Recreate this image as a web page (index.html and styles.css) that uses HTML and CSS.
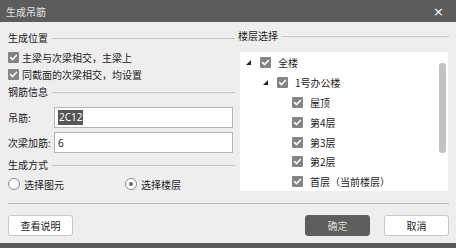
FILE: index.html
```html
<!DOCTYPE html>
<html lang="zh">
<head>
<meta charset="utf-8">
<link rel="stylesheet" href="styles.css">
</head>
<body>
<div class="dialog">
  <div class="titlebar">
    <span class="title">生成吊筋</span>
    <span class="close">×</span>
  </div>
  <div class="content">
    <div class="cols">
      <div class="left">
        <div class="group-title"><span>生成位置</span><i></i></div>
        <div class="check-row"><span class="cb"><svg viewBox="0 0 11 11"><polyline points="2.6,5.6 4.6,7.6 8.4,3.4"/></svg></span><span>主梁与次梁相交，主梁上</span></div>
        <div class="check-row"><span class="cb"><svg viewBox="0 0 11 11"><polyline points="2.6,5.6 4.6,7.6 8.4,3.4"/></svg></span><span>同截面的次梁相交，均设置</span></div>
        <div class="group-title g2"><span>钢筋信息</span><i></i></div>
        <div class="field-row f1"><span class="label">吊筋:</span><div class="input"><span class="sel">2C12</span></div></div>
        <div class="field-row f2"><span class="label">次梁加筋:</span><div class="input">6</div></div>
        <div class="group-title g3"><span>生成方式</span><i></i></div>
        <div class="radio-row">
          <div class="radio-item r1"><span class="radio"></span><span>选择图元</span></div>
          <div class="radio-item"><span class="radio on"><b></b></span><span>选择楼层</span></div>
        </div>
      </div>
      <div class="right">
        <div class="group-title"><span>楼层选择</span><i></i></div>
        <div class="tree">
          <div class="node l0"><span class="exp"><svg viewBox="0 0 5 5"><polygon points="0,5 5,5 5,0"/></svg></span><span class="cb"><svg viewBox="0 0 11 11"><polyline points="2.6,5.6 4.6,7.6 8.4,3.4"/></svg></span><span>全楼</span></div>
          <div class="node l1"><span class="exp"><svg viewBox="0 0 5 5"><polygon points="0,5 5,5 5,0"/></svg></span><span class="cb"><svg viewBox="0 0 11 11"><polyline points="2.6,5.6 4.6,7.6 8.4,3.4"/></svg></span><span>1号办公楼</span></div>
          <div class="node l2"><span class="exp"></span><span class="cb"><svg viewBox="0 0 11 11"><polyline points="2.6,5.6 4.6,7.6 8.4,3.4"/></svg></span><span>屋顶</span></div>
          <div class="node l2"><span class="exp"></span><span class="cb"><svg viewBox="0 0 11 11"><polyline points="2.6,5.6 4.6,7.6 8.4,3.4"/></svg></span><span>第4层</span></div>
          <div class="node l2"><span class="exp"></span><span class="cb"><svg viewBox="0 0 11 11"><polyline points="2.6,5.6 4.6,7.6 8.4,3.4"/></svg></span><span>第3层</span></div>
          <div class="node l2"><span class="exp"></span><span class="cb"><svg viewBox="0 0 11 11"><polyline points="2.6,5.6 4.6,7.6 8.4,3.4"/></svg></span><span>第2层</span></div>
          <div class="node l2"><span class="exp"></span><span class="cb"><svg viewBox="0 0 11 11"><polyline points="2.6,5.6 4.6,7.6 8.4,3.4"/></svg></span><span>首层（当前楼层）</span></div>
          <div class="scrollbar"></div>
        </div>
      </div>
    </div>
    <div class="sep"></div>
    <div class="buttons">
      <button class="btn">查看说明</button>
      <div class="spacer"></div>
      <button class="btn primary">确定</button>
      <button class="btn">取消</button>
    </div>
  </div>
</div>
</body>
</html>
```

FILE: styles.css
```css
html, body {
  margin: 0;
  padding: 0;
}
body {
  width: 456px;
  height: 248px;
  background: #5a5a5a;
  font-family: "Noto Sans CJK SC", "Noto Sans", sans-serif;
  font-size: 10px;
  color: #222;
  overflow: hidden;
}
.dialog {
  width: 456px;
  height: 243px;
  background: #eeeeee;
  display: flex;
  flex-direction: column;
}
.titlebar {
  height: 22px;
  background: #5c5c5c;
  display: flex;
  align-items: center;
  justify-content: space-between;
  padding: 0 12px 0 6px;
  box-sizing: border-box;
}
.title {
  color: #e2e2e2;
  font-size: 10px;
}
.close {
  color: #fff;
  font-family: "DejaVu Sans", sans-serif;
  font-size: 13px;
  line-height: 1;
}
.content {
  padding: 7px 7px 0 8px;
}
.cols {
  display: flex;
  gap: 5px;
}
.left {
  width: 225px;
  padding-top: 2px;
}
.right {
  width: 211px;
}
.group-title {
  height: 14px;
  line-height: 14px;
  display: flex;
  align-items: center;
  gap: 4px;
}
.group-title i {
  flex: 1;
  height: 1px;
  background: #c4c4c4;
}
.left .group-title i {
  margin-right: -2px;
}
.check-row {
  height: 17px;
  display: flex;
  align-items: center;
  gap: 3px;
}
.group-title + .check-row {
  margin-top: 4px;
}
.cb {
  width: 11px;
  height: 11px;
  background: #848484;
  border-radius: 1px;
  display: inline-flex;
  flex: none;
}
.cb svg {
  width: 11px;
  height: 11px;
}
.cb polyline {
  fill: none;
  stroke: #fff;
  stroke-width: 1.5;
  stroke-linecap: round;
  stroke-linejoin: round;
}
.g2 {
  margin-top: 2px;
}
.field-row {
  display: flex;
  align-items: center;
  height: 21px;
}
.f1 {
  margin-top: 8px;
}
.f2 {
  margin-top: 4px;
}
.label {
  width: 46px;
  flex: none;
}
.input {
  flex: 1;
  height: 21px;
  box-sizing: border-box;
  background: #fff;
  border: 1px solid #b4b4b4;
  display: flex;
  align-items: center;
  padding-left: 3px;
  font-family: "Noto Sans", sans-serif;
  font-size: 10px;
}
.sel {
  background: #555;
  color: #fff;
  padding: 1px 1px;
  line-height: 13px;
}
.g3 {
  margin-top: 5px;
}
.radio-row {
  display: flex;
  height: 16px;
  margin-top: 4px;
  align-items: center;
}
.radio-item {
  display: flex;
  align-items: center;
  gap: 4px;
}
.r1 {
  width: 117px;
}
.radio {
  width: 12px;
  height: 12px;
  box-sizing: border-box;
  border: 1px solid #8a8a8a;
  border-radius: 50%;
  background: #fff;
  display: flex;
  align-items: center;
  justify-content: center;
}
.radio b {
  width: 4px;
  height: 4px;
  border-radius: 50%;
  background: #6a6a6a;
}
.tree {
  position: relative;
  margin-top: 9px;
  margin-left: 2px;
  width: 208px;
  height: 139px;
  background: #fff;
  padding-top: 1px;
  box-sizing: border-box;
}
.node {
  height: 19.8px;
  display: flex;
  align-items: center;
}
.node .cb {
  margin-right: 7px;
}
.l0 { padding-left: 6px; }
.l1 { padding-left: 23px; }
.l2 { padding-left: 38px; }
.exp {
  width: 14px;
  flex: none;
  display: flex;
  align-items: center;
}
.exp svg {
  width: 5px;
  height: 5px;
}
.exp polygon {
  fill: #222;
}
.scrollbar {
  position: absolute;
  right: 2px;
  top: 11px;
  width: 7px;
  height: 90px;
  background: #c2c2c2;
  border-radius: 3px;
}
.sep {
  margin-top: 11px;
  height: 1px;
  background: #b8b8b8;
}
.buttons {
  margin-top: 11px;
  display: flex;
  gap: 14px;
}
.spacer {
  flex: 1;
}
.btn {
  width: 65px;
  height: 21px;
  box-sizing: border-box;
  background: #fff;
  border: 1px solid #c8c8c8;
  border-radius: 3px;
  font-family: "Noto Sans CJK SC", sans-serif;
  font-size: 10px;
  color: #222;
  padding: 0;
}
.primary {
  background: #5e5e5e;
  border-color: #5e5e5e;
  color: #d8d8d8;
}
```
